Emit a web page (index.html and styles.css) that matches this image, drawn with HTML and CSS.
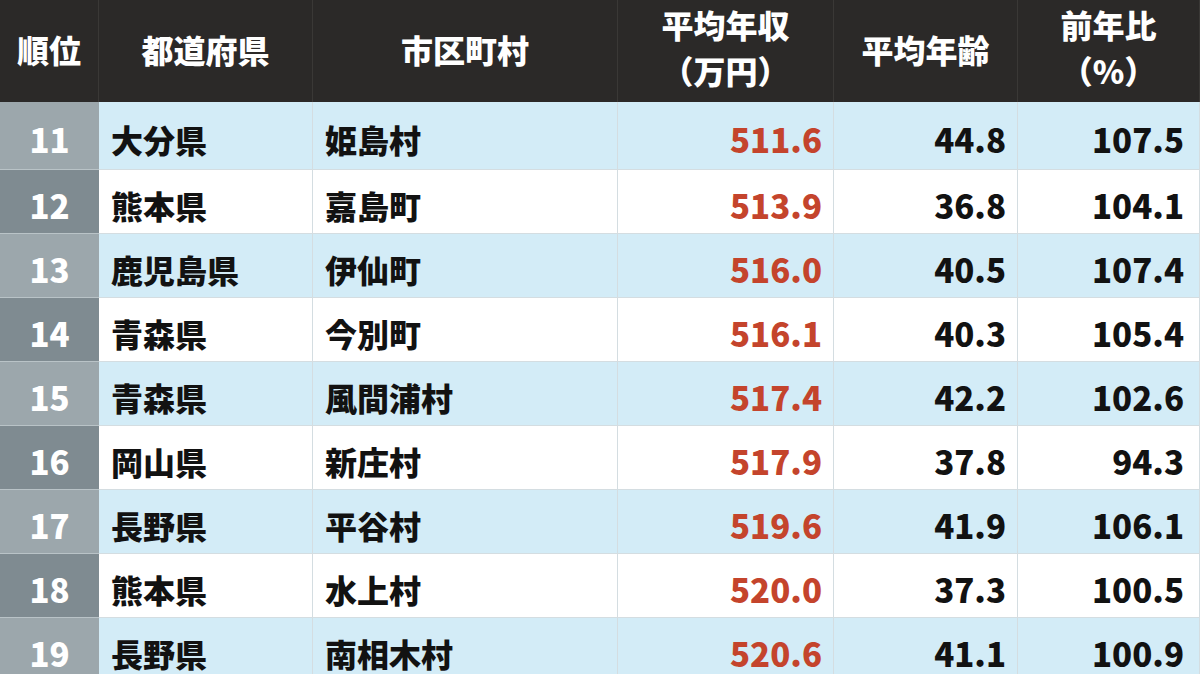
FILE: index.html
```html
<!DOCTYPE html>
<html lang="ja">
<head>
<meta charset="utf-8">
<title>平均年収ランキング</title>
<link rel="stylesheet" href="styles.css">
</head>
<body>
<div class="table">
  <div class="th">順位</div>
  <div class="th">都道府県</div>
  <div class="th">市区町村</div>
  <div class="th two">平均年収<br>（万円）</div>
  <div class="th">平均年齢</div>
  <div class="th two">前年比<br>（%）</div>

  <div class="rank odd">11</div><div class="td odd">大分県</div><div class="td odd">姫島村</div><div class="td odd num red">511.6</div><div class="td odd num">44.8</div><div class="td odd num last">107.5</div>
  <div class="rank even">12</div><div class="td even">熊本県</div><div class="td even">嘉島町</div><div class="td even num red">513.9</div><div class="td even num">36.8</div><div class="td even num last">104.1</div>
  <div class="rank odd">13</div><div class="td odd">鹿児島県</div><div class="td odd">伊仙町</div><div class="td odd num red">516.0</div><div class="td odd num">40.5</div><div class="td odd num last">107.4</div>
  <div class="rank even">14</div><div class="td even">青森県</div><div class="td even">今別町</div><div class="td even num red">516.1</div><div class="td even num">40.3</div><div class="td even num last">105.4</div>
  <div class="rank odd">15</div><div class="td odd">青森県</div><div class="td odd">風間浦村</div><div class="td odd num red">517.4</div><div class="td odd num">42.2</div><div class="td odd num last">102.6</div>
  <div class="rank even">16</div><div class="td even">岡山県</div><div class="td even">新庄村</div><div class="td even num red">517.9</div><div class="td even num">37.8</div><div class="td even num last">94.3</div>
  <div class="rank odd">17</div><div class="td odd">長野県</div><div class="td odd">平谷村</div><div class="td odd num red">519.6</div><div class="td odd num">41.9</div><div class="td odd num last">106.1</div>
  <div class="rank even">18</div><div class="td even">熊本県</div><div class="td even">水上村</div><div class="td even num red">520.0</div><div class="td even num">37.3</div><div class="td even num last">100.5</div>
  <div class="rank odd">19</div><div class="td odd">長野県</div><div class="td odd">南相木村</div><div class="td odd num red">520.6</div><div class="td odd num">41.1</div><div class="td odd num last">100.9</div>
</div>
</body>
</html>
```

FILE: styles.css
```css
html, body {
  margin: 0;
  padding: 0;
  background: #ffffff;
}
body {
  width: 1200px;
  height: 674px;
  overflow: hidden;
  font-family: "Noto Sans CJK JP", "Noto Sans", sans-serif;
  font-weight: 900;
}
.table {
  display: grid;
  grid-template-columns: 99px 214px 305px 216px 184px 182px;
  grid-template-rows: 102px 68px repeat(8, 64px);
}
.th {
  background: #2b2928;
  color: #ffffff;
  font-size: 32px;
  display: flex;
  align-items: center;
  justify-content: center;
  text-align: center;
  border-right: 1px solid #3a3836;
  line-height: 46px;
  padding-bottom: 4px;
}
.th.two {
  padding-bottom: 8px;
}
.rank {
  color: #ffffff;
  font-size: 33px;
  display: flex;
  align-items: center;
  justify-content: center;
  border-bottom: 1px solid #b9c3c7;
  padding-top: 6px;
}
.rank.odd { background: #9ca7ac; }
.rank.even { background: #7f8b91; }
.td {
  font-size: 32px;
  color: #121212;
  display: flex;
  align-items: center;
  padding-left: 12px;
  padding-top: 6px;
  border-right: 1px solid #d4dde1;
  border-bottom: 1px solid #d4dde1;
}
.td.odd { background: #d3ecf7; }
.td.even { background: #ffffff; }
.td.num {
  font-size: 33px;
  justify-content: flex-end;
  padding-left: 0;
  padding-right: 11px;
}
.td.last {
  padding-right: 15px;
}
.td.red {
  color: #c4442c;
}
```
